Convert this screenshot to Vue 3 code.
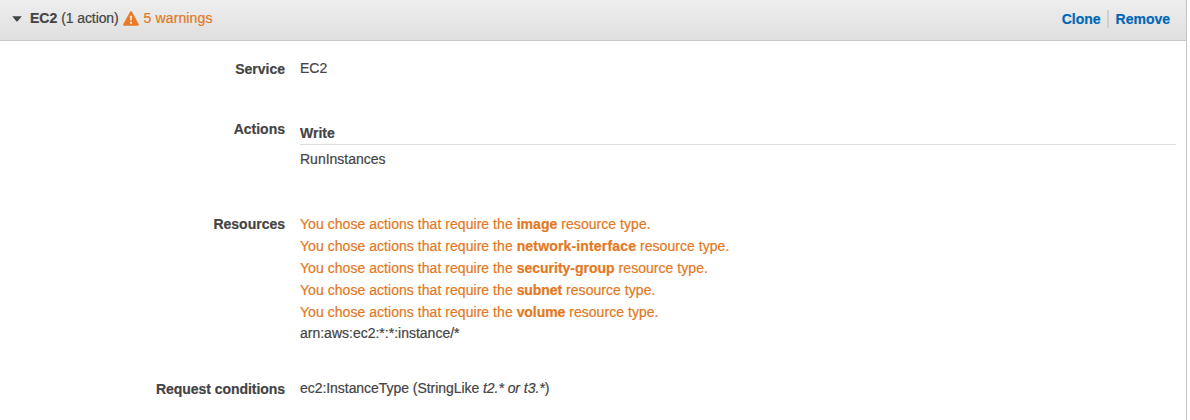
<script setup>
const required = ['image', 'network-interface', 'security-group', 'subnet', 'volume']
</script>

<template>
  <div class="panel">
    <header class="head">
      <svg class="caret" width="10" height="6" viewBox="0 0 10 6"><path d="M.2 .3H9.8L5.6 5.2Q5 5.8 4.4 5.2Z" fill="#444" /></svg>
      <b class="name">EC2</b>
      <span class="count">(1 action)</span>
      <svg class="warn" width="16" height="15" viewBox="0 0 16 15"><path d="M8 1L15 13.8H1Z" fill="#ec7a22" stroke="#ec7a22" stroke-width="1.8" stroke-linejoin="round" /><path d="M6.9 4.8H9.1L8.8 9.6H7.2ZM7 10.8H9V12.8H7Z" fill="#f4e9df" /></svg>
      <span class="warnings">5 warnings</span>
      <nav class="links"><a class="clone">Clone</a><a class="remove">Remove</a></nav>
    </header>
    <main class="body">
      <section class="row service"><b class="label">Service</b><div class="value">EC2</div></section>
      <section class="row actions"><b class="label">Actions</b>
        <div><div class="group"><b>Write</b></div><div class="action">RunInstances</div></div>
      </section>
      <section class="row resources"><b class="label">Resources</b>
        <div>
          <p v-for="r in required" :key="r" class="need">You chose actions that require the <b :class="r">{{ r }}</b> resource type.</p>
          <p class="arn">arn:aws:ec2:*:*:instance/*</p>
        </div>
      </section>
      <section class="row conditions"><b class="label request">Request conditions</b><div class="value condition">ec2:InstanceType (StringLike <i>t2.* or t3.*</i>)</div></section>
    </main>
  </div>
</template>

<style>
body { background: #fff; }
</style>

<style scoped>
.panel { box-sizing: border-box; width: 1187px; height: 420px; border-right: 1px solid #c4c4c4; overflow: hidden; font: 14px/22px "Liberation Sans", Arial, sans-serif; color: #444; -webkit-text-stroke: .2px currentColor; }
.head { box-sizing: border-box; height: 41px; display: flex; align-items: center; padding: 0 16px 4px 12px; background: linear-gradient(#eee, #dfdfdf); border-bottom: 1px solid #c8c8c8; white-space: nowrap; }
.caret { margin-top: 2px; }
.name { margin-left: 8px; }
.count { margin-left: 4px; letter-spacing: -.1px; }
.warn { margin-left: 4px; overflow: visible; }
.warnings { margin-left: 5px; color: #e47821; letter-spacing: .12px; }
.links { margin: 2px 0 0 auto; display: flex; color: #0067b8; font-weight: bold; line-height: 18px; }
.clone { height: 18px; padding-right: 6px; border-right: 2px solid #d0d0d0; }
.remove { padding-left: 7px; }
.body { padding-top: 17px; }
.row { display: grid; grid-template-columns: 285px 876px; column-gap: 15px; white-space: nowrap; }
.label { text-align: right; }
.request { letter-spacing: -.05px; }
.service { height: 60px; }
.actions { height: 95px; }
.resources { height: 165px; }
.value { margin-top: -1px; }
.condition { letter-spacing: -.05px; }
.group { margin-top: 4px; height: 22px; border-bottom: 1px solid #ddd; }
.action { padding-top: 3px; }
p { margin: 0; height: 22px; }
.need { color: #e47821; letter-spacing: .045px; }
.image { letter-spacing: .05px; }
.network-interface { letter-spacing: .16px; }
.security-group { letter-spacing: 0; }
.subnet, .volume { letter-spacing: -.07px; }
.arn { margin-top: -1px; }
</style>
